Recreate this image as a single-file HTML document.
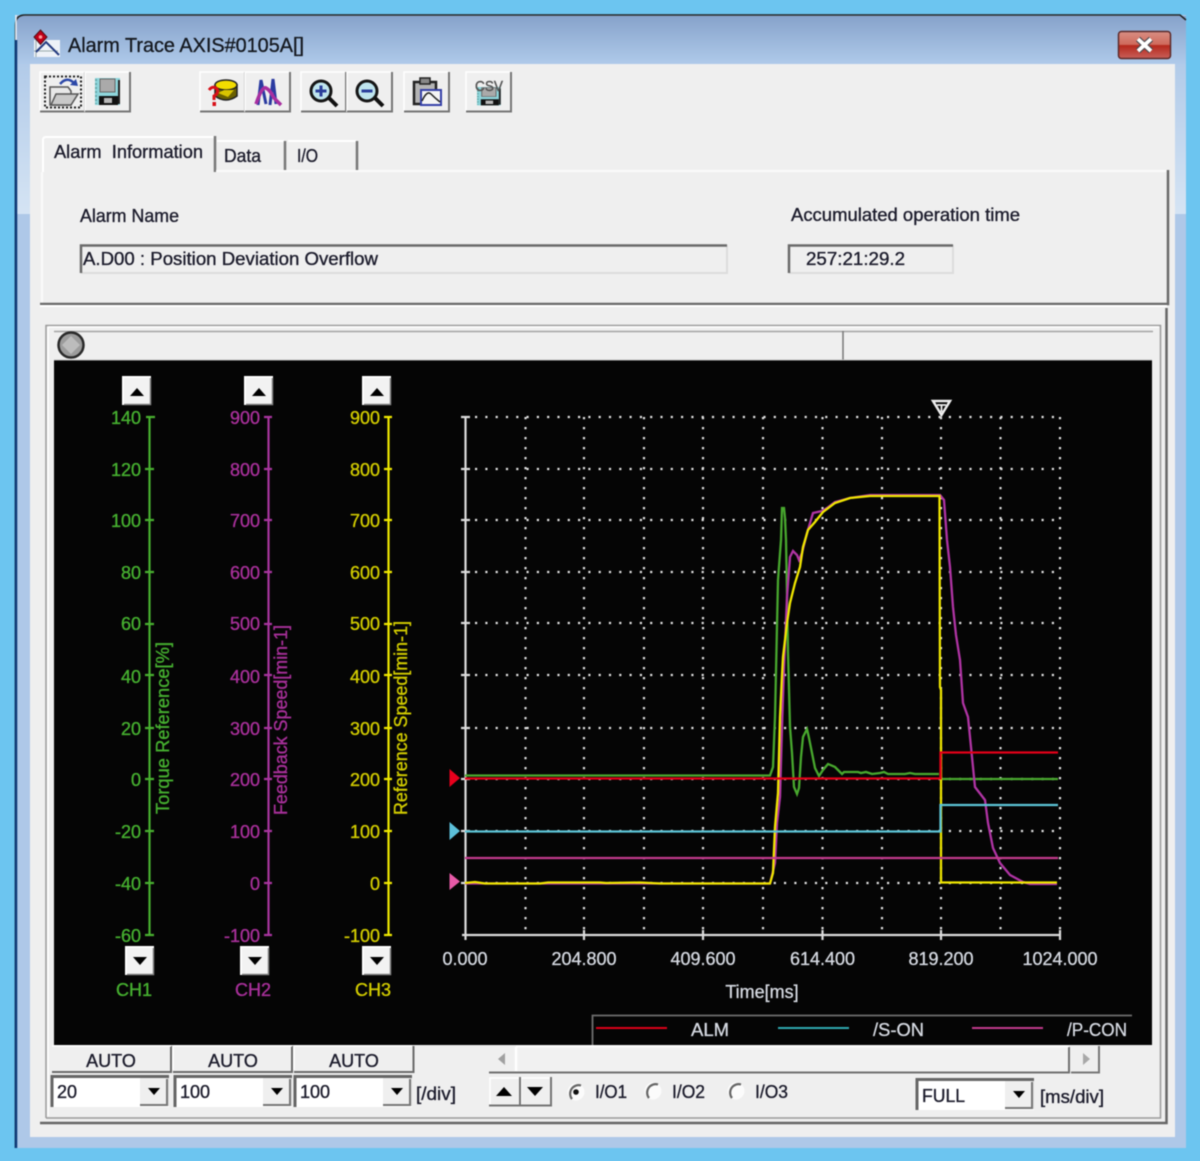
<!DOCTYPE html>
<html><head><meta charset="utf-8"><title>Alarm Trace</title>
<style>
html,body{margin:0;padding:0;background:#6cc5f0;width:1200px;height:1161px;overflow:hidden}
svg{display:block;filter:blur(.4px)}
text{font-family:"Liberation Sans",sans-serif;font-size:18px}
.d{fill:#1c1c2c;stroke:#1c1c2c;stroke-width:.35}
.g{fill:#46b030;stroke:#46b030;stroke-width:.35}.p{fill:#a8309a;stroke:#a8309a;stroke-width:.35}.y{fill:#d2cc00;stroke:#d2cc00;stroke-width:.35}.w{fill:#d6dae2;stroke:#d6dae2;stroke-width:.3}
.gl{stroke:#48b030}.pl{stroke:#a8359f}.yl{stroke:#eee800}
.gr{stroke:#e2e2e2;stroke-width:2.2;stroke-dasharray:2.2 8.1;fill:none}
.gv{stroke:#e2e2e2;stroke-width:2.2;stroke-dasharray:2.2 7.8;fill:none}
.tr{fill:none;stroke-width:2.3;stroke-linejoin:miter}
</style></head><body>
<svg width="1200" height="1161" viewBox="0 0 1200 1161" xmlns="http://www.w3.org/2000/svg">
<defs>
<linearGradient id="tb" x1="0" y1="0" x2="0" y2="1"><stop offset="0" stop-color="#87a3cb"/><stop offset="1" stop-color="#afcaea"/></linearGradient>
<linearGradient id="sd" x1="0" y1="0" x2="0" y2="1"><stop offset="0" stop-color="#b2cbe9"/><stop offset="1" stop-color="#d5e4f4"/></linearGradient>
<linearGradient id="cl" x1="0" y1="0" x2="0" y2="1"><stop offset="0" stop-color="#d98f84"/><stop offset=".48" stop-color="#cf6a5c"/><stop offset=".52" stop-color="#b5281c"/><stop offset="1" stop-color="#c9605a"/></linearGradient>
<g id="btn"><rect width="45" height="40" fill="#efefef"/><path d="M0 40V0H44" fill="none" stroke="#fff" stroke-width="1.5"/><path d="M0 39.5H45V0" fill="none" stroke="#767676" stroke-width="2"/></g>
<g id="sb"><rect width="28" height="28" fill="#f2f2f2"/><path d="M0 28V0H28" fill="none" stroke="#fff" stroke-width="2"/><path d="M1 27.5H27.5V1" fill="none" stroke="#808080" stroke-width="1.5"/></g>
<g id="combo"><rect width="118" height="32" fill="#fff"/><path d="M1 32V1.5H118" fill="none" stroke="#666" stroke-width="3"/><path d="M117 3V31" stroke="#ddd" stroke-width="2"/><rect x="89" y="3" width="27" height="27" fill="#efefef"/><path d="M89 30H116V4" fill="none" stroke="#777" stroke-width="2"/><path d="M97 13H109L103 20Z" fill="#000"/></g>
<g id="floppy"><rect x="0" y="0" width="25" height="27" fill="#8fd6dc"/><path d="M24 2V26" stroke="#222" stroke-width="2"/><path d="M1 1V26" stroke="#6aa" stroke-width="2" stroke-dasharray="2 2"/><rect x="5" y="1" width="15" height="13" fill="#aaa" stroke="#666"/><rect x="4" y="18" width="19" height="9" fill="#111"/><rect x="9" y="20" width="8" height="5" fill="#b8b8b8"/></g>
<g id="radio"><circle r="8.5" fill="#fbfbfb"/><path d="M5 -6.5A8.5 8.5 0 0 0 -4 7" fill="none" stroke="#666" stroke-width="2.2"/></g>
</defs>

<!-- window frame -->
<rect x="15" y="15" width="1171" height="1133" fill="#aec8e8"/>
<rect x="17" y="64" width="13" height="150" fill="url(#sd)"/>
<rect x="1175" y="64" width="11" height="150" fill="url(#sd)"/>
<rect x="15" y="16" width="1171" height="48" fill="url(#tb)"/>
<path d="M15.5 1148V25Q15.5 15 25 15H1180L1186 20" fill="none" stroke="#222" stroke-width="1.6"/>
<path d="M16 40V1148" stroke="#0d3a78" stroke-width="2.5"/>
<path d="M16 15V40" stroke="#eef3f8" stroke-width="1.5"/>
<rect x="30" y="64" width="1145" height="1073" fill="#efefef"/>

<!-- title -->
<rect x="34" y="40" width="26" height="17" fill="#eef2f8"/>
<path d="M34 51H58M36 40V57" stroke="#9aa" stroke-width="1"/>
<path d="M36 52L46 42L59 55" fill="none" stroke="#233a80" stroke-width="2"/>
<path d="M40.500 30L47 37L40.500 44.500L34 37Z" fill="#c00018" stroke="#501018"/>
<circle cx="40.500" cy="37" r="1.800" fill="#ff9a9a"/>
<text x="68" y="52" style="font-size:20px;stroke:#14181f;stroke-width:.3" fill="#14181f" textLength="236" lengthAdjust="spacingAndGlyphs">Alarm Trace AXIS#0105A[]</text>
<rect x="1118.500" y="31.500" width="52" height="27" rx="3" fill="url(#cl)" stroke="#5c2a2a" stroke-width="1.500"/>
<path d="M1138 39L1151 51M1151 39L1138 51" stroke="#4a4a50" stroke-width="6"/>
<path d="M1138 39L1151 51M1151 39L1138 51" stroke="#fff" stroke-width="3.800"/>

<!-- toolbar -->
<use href="#btn" x="40" y="72"/><use href="#btn" x="85" y="72"/>
<use href="#btn" x="200" y="72"/><use href="#btn" x="245" y="72"/>
<use href="#btn" x="301" y="72"/><use href="#btn" x="347" y="72"/>
<use href="#btn" x="404" y="72"/><use href="#btn" x="466" y="72"/>

<rect x="45" y="76.500" width="36" height="31" fill="none" stroke="#222" stroke-width="2" stroke-dasharray="2 2"/>
<path d="M50 87H68L71 91V105H50Z" fill="#e8e8e8" stroke="#555" stroke-width="1.500"/>
<path d="M51 105L56 94H78L71 105Z" fill="#c9c9c9" stroke="#555" stroke-width="1.500"/>
<path d="M60 84Q67 76 74 83" fill="none" stroke="#2c48a8" stroke-width="2.500"/><path d="M70 85L78 86L76 79Z" fill="#2c48a8"/>
<use href="#floppy" x="95" y="78"/>

<path d="M215 84V96Q226 104 237 96V84" fill="#6a6000" stroke="#222" stroke-width="1.500"/>
<ellipse cx="226" cy="85" rx="11" ry="5" fill="#f2dc00" stroke="#222" stroke-width="1.500"/>
<path d="M218 93L224 90H234L228 97Z" fill="#d8c400"/>
<path d="M209 90Q213 85 217 89Q219 93 214 96V100" fill="none" stroke="#d81018" stroke-width="3"/>
<rect x="212.500" y="102" width="3.500" height="4" fill="#d81018"/>
<path d="M258 105L261 80L266 104" fill="none" stroke="#2a3aa0" stroke-width="3"/>
<path d="M270 105L273 79L276 104" fill="none" stroke="#2a3aa0" stroke-width="3"/>
<path d="M256 104Q262 86 266 88T274 98L281 105" fill="none" stroke="#a82fa0" stroke-width="3.500"/>

<circle cx="321" cy="91" r="10" fill="#bfe5ee" stroke="#161616" stroke-width="3"/>
<path d="M329 98L337 106" stroke="#111" stroke-width="4"/>
<path d="M315.500 91H326.500M321 85.500V96.500" stroke="#2a3e9a" stroke-width="3"/>
<circle cx="367" cy="91" r="10" fill="#bfe5ee" stroke="#161616" stroke-width="3"/>
<path d="M375 98L383 106" stroke="#111" stroke-width="4"/>
<path d="M361.500 91H372.500" stroke="#2a3e9a" stroke-width="3"/>

<rect x="414" y="82" width="22" height="22" fill="#b4b4b4" stroke="#222" stroke-width="2.500"/>
<rect x="420" y="78" width="10" height="6" fill="#888" stroke="#222" stroke-width="1.500"/>
<rect x="421" y="90" width="20" height="15" fill="#f4f4f4" stroke="#3540a8" stroke-width="2"/>
<path d="M422 101Q427 90 431 94T440 102" fill="none" stroke="#222" stroke-width="1.500"/>

<use href="#floppy" transform="translate(477 87) scale(.95 .68)"/>
<text x="475" y="91" style="font-size:15px;stroke:#555;stroke-width:.4" fill="#555" textLength="28" lengthAdjust="spacingAndGlyphs">CSV</text>

<!-- tabs -->
<path d="M43 172V140Q43 137 46 137H214" fill="none" stroke="#fff" stroke-width="2"/>
<path d="M215 136V172" stroke="#777" stroke-width="2.500"/>
<path d="M217 141H284M288 141H356" stroke="#fff" stroke-width="2"/>
<path d="M285 141V170M357 141V170" stroke="#777" stroke-width="2.500"/>
<text x="54" y="158" class="d" textLength="149" lengthAdjust="spacingAndGlyphs">Alarm&#160;&#160;Information</text>
<text x="224" y="162" class="d" textLength="37" lengthAdjust="spacingAndGlyphs">Data</text>
<text x="297" y="162" class="d" textLength="21" lengthAdjust="spacingAndGlyphs">I/O</text>
<path d="M216 171H1167M42 172V303" fill="none" stroke="#fafafa" stroke-width="2"/>
<path d="M1168 170V304H40" fill="none" stroke="#6a6a6a" stroke-width="2.500"/>
<path d="M40 306H1167" stroke="#fff" stroke-width="2"/>

<text x="80" y="222" class="d" textLength="99" lengthAdjust="spacingAndGlyphs">Alarm Name</text>
<text x="791" y="221" class="d" textLength="229" lengthAdjust="spacingAndGlyphs">Accumulated operation time</text>
<path d="M81 273H727V245" fill="none" stroke="#dcdcdc" stroke-width="2"/>
<path d="M81 273V245.500H727" fill="none" stroke="#6a6a6a" stroke-width="2.500"/>
<path d="M789 273H953V245" fill="none" stroke="#dcdcdc" stroke-width="2"/>
<path d="M789 273V245.500H953" fill="none" stroke="#6a6a6a" stroke-width="2.500"/>
<text x="83" y="265" class="d" textLength="295" lengthAdjust="spacingAndGlyphs">A.D00 : Position Deviation Overflow</text>
<text x="806" y="265" class="d" textLength="99" lengthAdjust="spacingAndGlyphs">257:21:29.2</text>

<!-- lower group -->
<path d="M1166.500 308V1123H40" fill="none" stroke="#666" stroke-width="2.500"/>
<path d="M46 1118V325.500H1160.500V1118H46" fill="none" stroke="#9a9a9a" stroke-width="1.500"/>
<path d="M48 327H1159M48 327V1116" fill="none" stroke="#fff" stroke-width="1.500"/>
<path d="M54 331.500H1153" stroke="#a4a4a4" stroke-width="1.500"/>
<path d="M843 331V360" stroke="#777" stroke-width="1.500"/>
<circle cx="71" cy="345" r="12.500" fill="#9c9c9c" stroke="#2a2a2a" stroke-width="2.500"/>
<path d="M71 336L80 345L71 354L62 345Z" fill="#bcbcbc"/>

<!-- black scope -->
<rect x="54" y="360" width="1098" height="685" fill="#050505"/>
<path d="M54 360H1152" stroke="#bbb" stroke-width="1"/>

<!-- scroll buttons on scope -->
<use href="#sb" x="123" y="377"/><path d="M130 396H144L137 388Z" fill="#000"/>
<use href="#sb" x="245" y="377"/><path d="M252 396H266L259 388Z" fill="#000"/>
<use href="#sb" x="363" y="377"/><path d="M370 396H384L377 388Z" fill="#000"/>
<use href="#sb" x="126" y="947"/><path d="M133 957H147L140 965Z" fill="#000"/>
<use href="#sb" x="241" y="947"/><path d="M248 957H262L255 965Z" fill="#000"/>
<use href="#sb" x="363" y="947"/><path d="M370 957H384L377 965Z" fill="#000"/>

<!-- axes -->
<path class="gl" stroke-width="2.200" fill="none" d="M149.500 417V935M146 417H155M145 469H154M145 520H154M145 572H154M145 624H154M145 675H154M145 728H154M145 779H154M145 831H154M145 883H154M145 935H154"/>
<path class="pl" stroke-width="2.200" fill="none" d="M268.500 417V935M264 417H272M264 469H272M264 520H272M264 572H272M264 624H272M264 675H272M264 728H272M264 779H272M264 831H272M264 883H272M264 935H272"/>
<path class="yl" stroke-width="2.200" fill="none" d="M388.500 417V935M384 417H392M384 469H392M384 520H392M384 572H392M384 624H392M384 675H392M384 728H392M384 779H392M384 831H392M384 883H392M384 935H392"/>
<g class="g" text-anchor="end">
<text x="141" y="424">140</text><text x="141" y="476">120</text><text x="141" y="527">100</text><text x="141" y="579">80</text><text x="141" y="630">60</text><text x="141" y="683">40</text><text x="141" y="735">20</text><text x="141" y="786">0</text><text x="141" y="838">-20</text><text x="141" y="890">-40</text><text x="141" y="942">-60</text>
</g>
<g class="p" text-anchor="end">
<text x="260" y="424">900</text><text x="260" y="476">800</text><text x="260" y="527">700</text><text x="260" y="579">600</text><text x="260" y="630">500</text><text x="260" y="683">400</text><text x="260" y="735">300</text><text x="260" y="786">200</text><text x="260" y="838">100</text><text x="260" y="890">0</text><text x="260" y="942">-100</text>
</g>
<g class="y" text-anchor="end">
<text x="380" y="424">900</text><text x="380" y="476">800</text><text x="380" y="527">700</text><text x="380" y="579">600</text><text x="380" y="630">500</text><text x="380" y="683">400</text><text x="380" y="735">300</text><text x="380" y="786">200</text><text x="380" y="838">100</text><text x="380" y="890">0</text><text x="380" y="942">-100</text>
</g>
<text transform="translate(169 814) rotate(-90)" class="g" textLength="172" lengthAdjust="spacingAndGlyphs">Torque Reference[%]</text>
<text transform="translate(287 815) rotate(-90)" class="p" textLength="190" lengthAdjust="spacingAndGlyphs">Feedback Speed[min-1]</text>
<text transform="translate(407 815) rotate(-90)" class="y" textLength="194" lengthAdjust="spacingAndGlyphs">Reference Speed[min-1]</text>
<text x="134" y="996" class="g" text-anchor="middle">CH1</text>
<text x="253" y="996" class="p" text-anchor="middle">CH2</text>
<text x="373" y="996" class="y" text-anchor="middle">CH3</text>

<!-- grid -->
<path class="gr" d="M475 417H1062M475 469H1062M475 520H1062M475 572H1062M475 623H1062M475 675H1062M475 728H1062M475 779H1062M475 831H1062M475 883H1062"/>
<path class="gv" d="M525.500 417V932M584 417V932M644 417V932M703 417V932M763 417V932M822.500 417V932M882 417V932M941 417V932M1000.500 417V932M1060 417V932"/>
<path d="M465.500 417V940M461 417H470M461 469H470M461 520H470M461 572H470M461 623H470M461 675H470M461 728H470M461 779H470M461 831H470M461 883H470M462 935H1060M584 930V940M703 930V940M822.500 930V940M941 930V940M1060 930V940" fill="none" stroke="#dcdcdc" stroke-width="2.200"/>
<path d="M933 401H950L941.500 415Z" fill="none" stroke="#eee" stroke-width="2.500"/>
<path d="M937 405H946M941.500 405V412" stroke="#eee" stroke-width="1.800"/>

<!-- markers -->
<path d="M449.500 769L460 778L449.500 787Z" fill="#e8001c"/>
<path d="M449.500 822L460 831L449.500 840Z" fill="#5cc0da"/>
<path d="M449.500 873L460 881.500L449.500 890Z" fill="#e85aa8"/>

<!-- traces -->
<path class="tr" stroke="#48a82e" d="M465 775.500H770L773 767L775 717L778 580L781 540L782 508H784L785 518L786 540L788 652L790 727L792 753L794 787L797 794L799 788L801 757L803 737L807 729L809 738L812 753L815 768L819 776L823 770L828 764L835 767L842 774L844 772H858L861 773L866 772L872 774L880 773L884 772L888 774H905L910 773L915 774H939"/>
<path class="tr" stroke="#48a82e" d="M941 779H1058"/>
<path class="tr" stroke="#b034a4" d="M465 883.500H770L775 863L777 823L780 797L782 727L784 667L787 597L790 557L793 551L797 555L799 560L802 553L807 533L813 513L822 511L827 508L835 502L850 498L870 495H940L944 500L947 540L950 567L953 607L956 635L960 660L963 703L968 717L972 757L975 787L985 800L988 823L993 848L1000 863L1010 875L1023 882L1030 884H1057"/>
<path class="tr" stroke="#efe600" d="M465 883L475 882L485 883.500H540L548 882.500H600L606 883L640 882.500L660 883.500H770L773 873L775 827L778 793L780 717L782 675L783 657L787 623L790 603L795 583L800 567L803 547L808 530L815 522L823 512L835 503L850 498L870 496H939.500L940 687L941 690V882.500H1057"/>
<path class="tr" stroke="#5cc4d6" d="M465 831.500H940.500V805H1058"/>
<path class="tr" stroke="#c23a8c" d="M465 858H1058"/>
<path class="tr" stroke="#e40018" stroke-width="2.500" d="M465 778.500H940.500V752.500H1058"/>

<!-- x labels -->
<g class="w" text-anchor="middle">
<text x="465" y="965">0.000</text><text x="584" y="965">204.800</text><text x="703" y="965">409.600</text><text x="822.500" y="965">614.400</text><text x="941" y="965">819.200</text><text x="1060" y="965">1024.000</text>
<text x="762" y="998">Time[ms]</text>
</g>

<!-- legend -->
<path d="M592.500 1045V1015.500H1132" fill="none" stroke="#6e6e6e" stroke-width="1.800"/>
<path d="M596 1028H667" stroke="#dc0018" stroke-width="2"/>
<path d="M778 1028H849" stroke="#2ea8b0" stroke-width="2"/>
<path d="M972 1028H1043" stroke="#c23a8c" stroke-width="2"/>
<text x="691" y="1036" class="w" textLength="38" lengthAdjust="spacingAndGlyphs">ALM</text>
<text x="873" y="1036" class="w" textLength="51" lengthAdjust="spacingAndGlyphs">/S-ON</text>
<text x="1067" y="1036" class="w" textLength="60" lengthAdjust="spacingAndGlyphs">/P-CON</text>

<!-- AUTO buttons -->
<rect x="52" y="1046" width="362" height="25" fill="#efefef"/>
<path d="M171 1046V1072H52M292 1046V1072H173M413.500 1046V1072H294" fill="none" stroke="#6a6a6a" stroke-width="2"/>
<path d="M52 1046H171M173 1047V1070M173 1046H292M294 1047V1070M294 1046H412" fill="none" stroke="#fff" stroke-width="1.500"/>
<text x="111" y="1067" class="d" text-anchor="middle">AUTO</text>
<text x="233" y="1067" class="d" text-anchor="middle">AUTO</text>
<text x="354" y="1067" class="d" text-anchor="middle">AUTO</text>

<!-- combos -->
<use href="#combo" x="51" y="1075"/><use href="#combo" x="174" y="1075"/><use href="#combo" x="294" y="1075"/>
<text x="57" y="1098" class="d">20</text><text x="180" y="1098" class="d">100</text><text x="300" y="1098" class="d">100</text>
<text x="416" y="1100" class="d" textLength="40" lengthAdjust="spacingAndGlyphs">[/div]</text>

<!-- scrollbar -->
<rect x="516" y="1047" width="553" height="25" fill="#f1f1f1"/>
<path d="M489 1072.500H1069V1047" fill="none" stroke="#707070" stroke-width="2"/>
<path d="M516 1047V1071" stroke="#fff" stroke-width="2.500"/>
<path d="M516 1046.500H1069" stroke="#fff" stroke-width="1.500"/>
<path d="M505 1053V1065L498 1059Z" fill="#a0a0a0"/>
<path d="M1071 1072.500H1099V1046" fill="none" stroke="#777" stroke-width="2"/>
<path d="M1083 1053V1065L1090 1059Z" fill="#a8a8a8"/>

<!-- up/down -->
<path d="M490 1105V1078H519M521 1105V1078H550" fill="none" stroke="#fff" stroke-width="1.500"/>
<path d="M489 1105.500H551V1077M520 1105V1077" fill="none" stroke="#747474" stroke-width="2"/>
<path d="M496 1096H512L504 1087Z" fill="#000"/>
<path d="M527 1087H543L535 1096Z" fill="#000"/>

<!-- radios -->
<use href="#radio" x="576" y="1092"/><circle cx="576" cy="1092" r="2.800" fill="#111"/>
<use href="#radio" x="653" y="1091"/><use href="#radio" x="736" y="1091"/>
<text x="595" y="1098" class="d" textLength="32" lengthAdjust="spacingAndGlyphs">I/O1</text>
<text x="672" y="1098" class="d" textLength="33" lengthAdjust="spacingAndGlyphs">I/O2</text>
<text x="755" y="1098" class="d" textLength="33" lengthAdjust="spacingAndGlyphs">I/O3</text>

<use href="#combo" x="916" y="1078"/>
<text x="922" y="1102" class="d" textLength="43" lengthAdjust="spacingAndGlyphs">FULL</text>
<text x="1040" y="1103" class="d" textLength="64" lengthAdjust="spacingAndGlyphs">[ms/div]</text>
</svg>
</body></html>
